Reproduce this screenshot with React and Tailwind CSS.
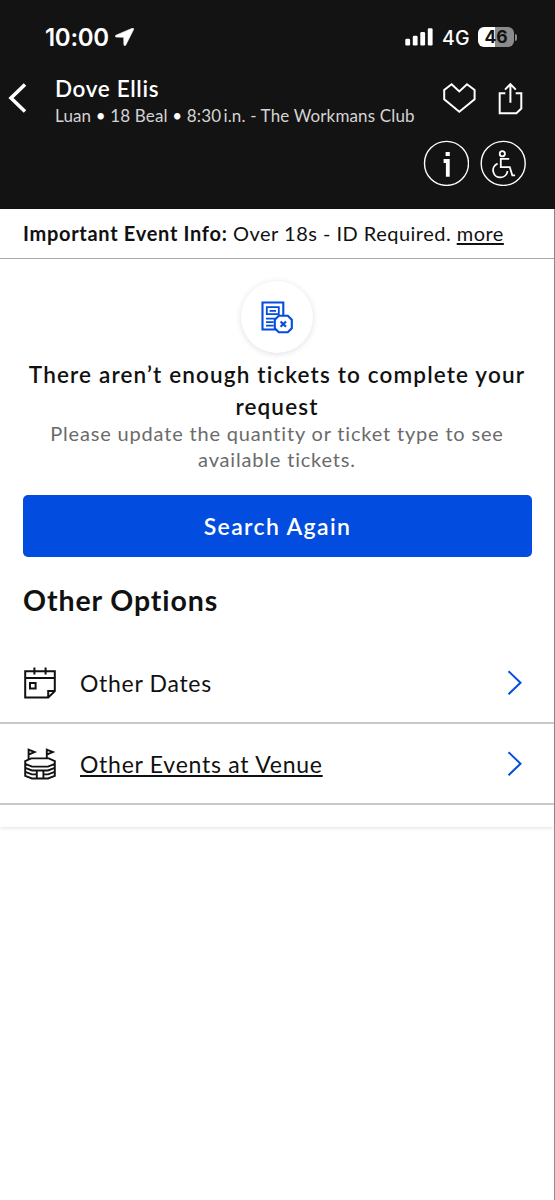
import React from "react";

function LocationArrow() {
  return (
    <svg viewBox="0 0 19 18" className="w-[19px] h-[18px]" fill="#fff">
      <path d="M17.4.2 1 7.2c-1 .5-.8 1.9.3 1.9l7.4.2.2 7.5c0 1.1 1.4 1.3 1.9.3l7.8-15.6c.4-.8-.4-1.6-1.2-1.3Z" stroke="#fff" strokeWidth=".6" />
    </svg>
  );
}

function Signal() {
  return (
    <svg viewBox="0 0 28 18" className="w-7 h-[18px]" fill="#fff">
      <rect x="0.3" y="10.8" width="4.8" height="6.7" rx="1.3" />
      <rect x="7.8" y="7.8" width="4.8" height="9.7" rx="1.3" />
      <rect x="15.3" y="4" width="4.8" height="13.5" rx="1.3" />
      <rect x="22.8" y="0.2" width="4.8" height="17.3" rx="1.3" />
    </svg>
  );
}

function StatusBar() {
  return (
    <div className="h-[74px] pl-[45px] pr-[38px] flex items-center justify-between font-['Inter']">
      <div className="flex items-center gap-[6px]">
        <span className="w-[64px] whitespace-nowrap text-[24px] leading-[24px] pt-[2px] font-semibold tracking-[-0.3px]">10:00</span>
        <LocationArrow />
      </div>
      <div className="flex items-center">
        <Signal />
        <span className="ml-[9px] w-[36px] pt-[2px] text-[19.5px] leading-[20px] font-medium tracking-[0.2px]">4G</span>
        <div className="w-9 h-5 rounded-[6px] bg-[linear-gradient(90deg,#fff_47%,#8b8b8b_47%)] text-[#131313] text-center text-[17.5px] leading-5 font-bold">
          46
        </div>
        <div className="ml-px w-[2px] h-[7px] rounded-r-full bg-[#8b8b8b]" />
      </div>
    </div>
  );
}

function HeaderBar() {
  return (
    <div className="h-[60px] flex">
      <svg viewBox="0 0 55 60" className="w-[55px] h-[60px]" fill="none" stroke="#fff" strokeWidth="3.6">
        <path d="M25 10.5 11 24 25 37.5" />
      </svg>
      <div className="w-[382px] whitespace-nowrap">
        <h1 className="mt-[1px] text-[22.5px] leading-[28px] font-semibold tracking-[0.65px]">Dove Ellis</h1>
        <p className="mt-px text-[17px] leading-[24px] tracking-[0.15px] text-[#d4d4d4]">
          Luan <span className="text-white">•</span> 18 Beal <span className="text-white">•</span> 8:30&#8201;i.n. - The Workmans Club
        </p>
      </div>
      <svg viewBox="437 74 100 60" className="w-[100px] h-[60px]" fill="none" stroke="#fff" strokeWidth="2">
        <path d="M451.6 84.3 459.3 91.5l7.7-7.2 7.6 5.6v9.3l-15.3 12.6-15.1-12.6v-9.3Z" />
        <path d="M505.3 93.3h-5.6v19.9h16.7l4.9-4.6V93.3h-5.6M510.4 84v18.8M505 89.6l5.4-5.5 5.4 5.5" />
      </svg>
    </div>
  );
}

function InfoIcon() {
  return (
    <svg viewBox="0 0 46 46" className="w-[46px] h-[46px]" fill="none" stroke="#fff">
      <circle cx="23.5" cy="23.4" r="22" strokeWidth="1.4" />
      <path d="M22.6 14h4.2M20.6 21h4.2v15.8" strokeWidth="3.8" />
    </svg>
  );
}

function AccessibleIcon() {
  return (
    <svg viewBox="0 0 46 46" className="w-[46px] h-[46px]" fill="none" stroke="#fff">
      <circle cx="23.2" cy="23.4" r="22" strokeWidth="1.4" />
      <g strokeWidth="1.8">
        <circle cx="22.3" cy="13.7" r="2.6" />
        <path d="M29.2 18.9h-8.4v8.3h9l2.5 8.1h2.8M17.6 23.6a7.2 7.2 0 1 0 9.9 7.4" />
      </g>
    </svg>
  );
}

function NoTicketsIcon() {
  return (
    <svg viewBox="0 0 34 34" className="w-[34px] h-[34px]" fill="none" stroke="#024ddf" strokeWidth="2.1">
      <path d="M23.3 15V2.5H2.5v27h14" />
      <path d="M6.8 7.2h12v7h-12ZM9.6 10.8h6.4M6 18.6h9.4M6 22.2h7.6M6 25.6h7.6" strokeWidth="1.8" />
      <path d="M18.8 15.8h9l4 4v8.4l-4 4h-9l-4-4v-8.4Z" fill="#fff" />
      <path d="m20.6 21.4 5.4 5.4m0-5.4-5.4 5.4" />
    </svg>
  );
}

function CalendarIcon() {
  return (
    <svg viewBox="0 0 34 34" className="w-[34px] h-[34px]" fill="none" stroke="#111" strokeWidth="2">
      <path d="M2.2 5.2h29.6v19.9l-6.6 6.4H2.2ZM2.2 11.9h29.6M11.4 1.4v7.2M22.6 1.4v7.2" />
      <path d="M7 17h5.6v5.4H7ZM25.2 31.5v-6.4h6.6" />
    </svg>
  );
}

function StadiumIcon() {
  return (
    <svg viewBox="0 0 34 34" className="w-[34px] h-[34px]" fill="none" stroke="#111" strokeWidth="1.9">
      <path d="M5.6 12V2.6l6 2.5-6 2.4M23.8 11.4V2.6l6 2.5-6 2.4" />
      <path d="M8.2 11.4h17.6l6 2.8v2.7L25 19.6H9l-6.8-2.7v-2.7ZM2.2 16.8v12.1L9 31.5h16l6.8-2.6V16.8" />
      <path d="M2.2 20.9 9 23.5h16l6.8-2.6M2.2 24.9 9 27.4h4.6M20.4 27.4H25l6.8-2.5M13.8 24v7M20.4 24v7" />
    </svg>
  );
}

function OptionRow({ icon, label, underlined }) {
  return (
    <div className="h-[81px] pl-[23px] pr-[31px] flex items-center border-b-2 border-[#c9c9c9]">
      {icon}
      <span
        className={
          underlined
            ? "ml-[23px] text-[23px] leading-[28px] tracking-[0.75px] underline decoration-[1.5px] underline-offset-[2px]"
            : "ml-[23px] text-[23px] leading-[28px] tracking-[0.7px]"
        }
      >
        {label}
      </span>
      <svg viewBox="0 0 16 26" className="ml-auto w-4 h-[26px]" fill="none" stroke="#024ddf" strokeWidth="2">
        <path d="M1.5 1.2 13.5 12.7 1.5 24.2" />
      </svg>
    </div>
  );
}

export default function App() {
  return (
    <div className="w-[555px] h-[1200px] overflow-hidden bg-white text-[#111] font-['Lato',sans-serif]">
      <header className="h-[209px] bg-[#131313] text-white">
        <StatusBar />
        <HeaderBar />
        <div className="mt-[6px] pr-[29px] flex justify-end gap-[11px]">
          <InfoIcon />
          <AccessibleIcon />
        </div>
      </header>

      <main className="h-[991px] border-r border-[#8f8f8f]">
        <section className="pb-[22px] shadow-[0_1px_4px_rgba(0,0,0,0.12)]">
          <p className="h-[50px] pl-[23px] border-b border-[#aaa] whitespace-nowrap text-[20px] leading-[49px] tracking-[0.48px]">
            <b className="tracking-[0.7px]">Important Event Info:</b> Over 18s - ID Required.{" "}
            <a className="underline decoration-[1.5px] underline-offset-[2px]">more</a>
          </p>

          <div className="pt-[22px] flex flex-col items-center text-center">
            <div className="w-[72px] h-[72px] rounded-full flex items-center justify-center shadow-[0_1px_6px_rgba(0,0,0,0.13)]">
              <NoTicketsIcon />
            </div>
            <h2 className="mt-[6px] text-[22.5px] leading-[31.5px] font-semibold tracking-[1.15px] whitespace-nowrap">
              There aren’t enough tickets to complete your
              <br />
              request
            </h2>
            <p className="-mt-px text-[20px] leading-[25.5px] tracking-[0.82px] text-[#6b6b6b] whitespace-nowrap">
              Please update the quantity or ticket type to see
              <br />
              available tickets.
            </p>
          </div>

          <button className="ml-[23px] mt-[23px] block w-[509px] h-[62px] pt-px rounded-[5px] bg-[#024ddf] text-white text-[23px] font-semibold tracking-[1.35px]">
            Search Again
          </button>

          <h3 className="mt-[25px] ml-[23px] text-[28.5px] leading-[36px] font-bold tracking-[0.9px]">Other Options</h3>

          <div className="mt-[25px]">
            <OptionRow icon={<CalendarIcon />} label="Other Dates" />
            <OptionRow icon={<StadiumIcon />} label="Other Events at Venue" underlined />
          </div>
        </section>
      </main>
    </div>
  );
}
